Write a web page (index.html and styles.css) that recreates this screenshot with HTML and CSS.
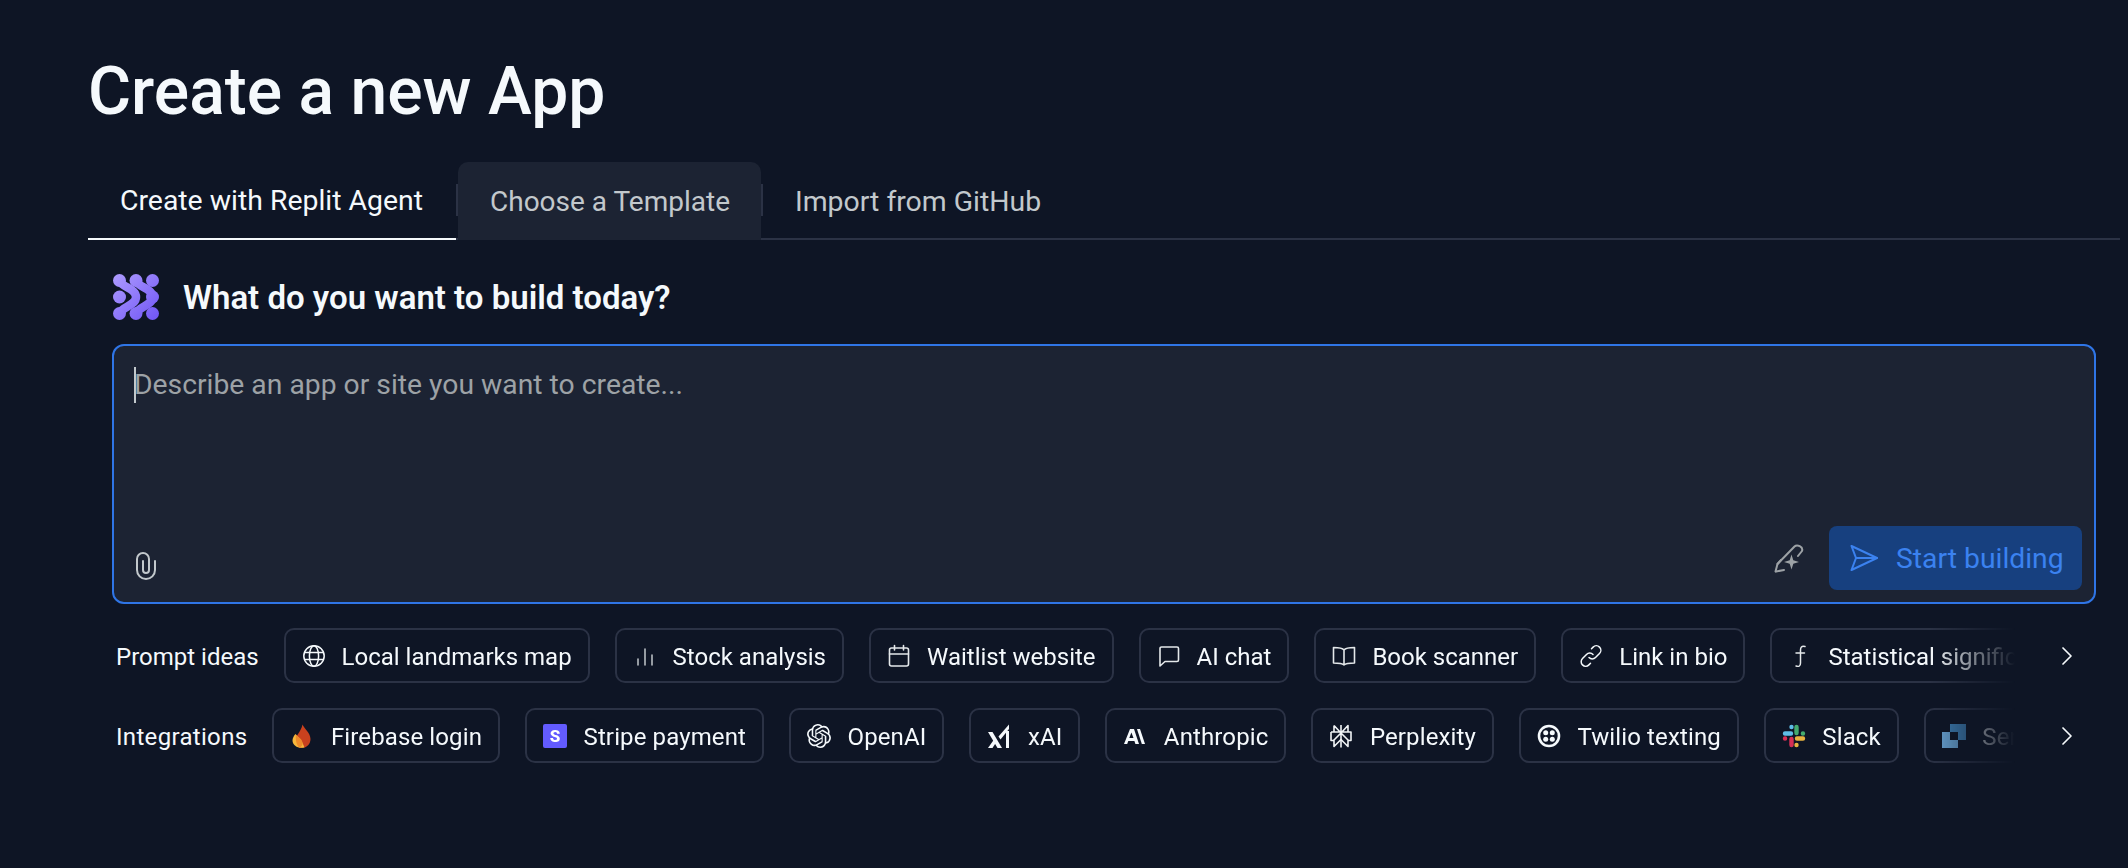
FILE: index.html
```html
<!DOCTYPE html>
<html lang="en">
  <head>
    <meta charset="UTF-8" />
    <meta name="viewport" content="width=device-width, initial-scale=1.0" />
    <title>Create a new App</title>
    <link rel="stylesheet" href="styles.css">
  </head>
  <body>
    <main class="page">
      <h1 class="title">Create a new App</h1>

      <div class="tabs">
        <a class="tab active">Create with Replit Agent</a>
        <a class="tab hovered">Choose a Template</a>
        <a class="tab">Import from GitHub</a>
      </div>

      <section class="agent">
        <div class="question">
          <svg class="agent-logo" width="46" height="46" viewBox="0 0 46 46">
            <defs>
              <linearGradient id="agentGrad" gradientUnits="userSpaceOnUse" x1="0" y1="0" x2="46" y2="46">
                <stop offset="0" stop-color="#ae9cff" />
                <stop offset="1" stop-color="#7055f5" />
              </linearGradient>
            </defs>
            <g fill="url(#agentGrad)">
              <circle cx="6.5" cy="6.5" r="6.5" />
              <circle cx="23" cy="6.5" r="6.5" />
              <circle cx="39.5" cy="6.5" r="6.5" />
              <circle cx="6.5" cy="23" r="6.5" />
              <circle cx="39.5" cy="23" r="6.5" />
              <circle cx="6.5" cy="39.5" r="6.5" />
              <circle cx="23" cy="39.5" r="6.5" />
              <circle cx="39.5" cy="39.5" r="6.5" />
            </g>
            <g fill="none" stroke="url(#agentGrad)" stroke-width="8.5" stroke-linecap="round">
              <path d="M6.5 6.5 C9 14 23 14 23 23 C23 32 9 32 6.5 39.5" />
              <path d="M23 6.5 C25.5 14 39.5 14 39.5 23 C39.5 32 25.5 32 23 39.5" />
            </g>
          </svg>
          <h2 class="question-text">What do you want to build today?</h2>
        </div>

        <div class="prompt-box">
          <div class="placeholder"><span class="caret"></span>Describe an app or site you want to create...</div>
          <div class="prompt-footer">
            <svg class="clip-icon" width="20" height="28" viewBox="0 0 20 28" fill="none" stroke="#c2c8cc" stroke-width="2" stroke-linecap="round">
              <path d="M19 9 V18 a9 9 0 0 1 -18 0 V7 a6 6 0 0 1 12 0 V18 a3 3 0 0 1 -6 0 V9" />
            </svg>
            <div class="prompt-actions">
              <svg class="pen-icon" width="30" height="30" viewBox="0 0 30 30" fill="none" stroke="#9da2a6" stroke-width="2" stroke-linecap="round" stroke-linejoin="round">
                <path d="M1.5 28.5 L3.5 21 L20.5 3.5 C23 1 29.5 3.5 28 8 L24 13" />
                <path d="M2 28.5 L10 27" />
                <path d="M3.5 21 L7 17" />
                <path fill="#9da2a6" stroke="none" d="M17.5 11.5 L19.3 17.2 L25 19 L19.3 20.8 L17.5 26.5 L15.7 20.8 L10 19 L15.7 17.2 Z" />
              </svg>
              <button class="start-btn">
                <svg width="28" height="28" viewBox="0 0 28 28" fill="none" stroke="#3b82f0" stroke-width="2" stroke-linejoin="round" stroke-linecap="round">
                  <path d="M1.5 2 L27 14 L1.5 26 L6 14 Z" />
                  <path d="M6 14 H27" />
                </svg>
                <span>Start building</span>
              </button>
            </div>
          </div>
        </div>

        <div class="chip-row">
          <span class="row-label">Prompt ideas</span>
          <div class="chip-scroll">
            <a class="chip">
              <svg class="chip-icon" viewBox="0 0 24 24" fill="none" stroke="#f5f9fc" stroke-width="1.5">
                <circle cx="12" cy="12" r="10.2" />
                <ellipse cx="12" cy="12" rx="4.6" ry="10.2" />
                <path d="M2.2 8.5 H21.8 M2.2 15.5 H21.8" />
              </svg>
              Local landmarks map
            </a>
            <a class="chip">
              <svg class="chip-icon" viewBox="0 0 24 24" fill="none" stroke="#c2c8cc" stroke-width="1.5" stroke-linecap="round">
                <path d="M5 15 V21 M12 5 V21 M19 11 V21" />
              </svg>
              Stock analysis
            </a>
            <a class="chip">
              <svg class="chip-icon" viewBox="0 0 24 24" fill="none" stroke="#e4e8ea" stroke-width="1.6" stroke-linecap="round" stroke-linejoin="round">
                <rect x="2.5" y="4" width="19" height="18" rx="2" />
                <path d="M2.5 10 H21.5 M7.5 1.5 V6 M16.5 1.5 V6" />
              </svg>
              Waitlist website
            </a>
            <a class="chip">
              <svg class="chip-icon" viewBox="0 0 24 24" fill="none" stroke="#e4e8ea" stroke-width="1.6" stroke-linejoin="round">
                <path d="M3 4.5 a1.5 1.5 0 0 1 1.5 -1.5 H20 a1.5 1.5 0 0 1 1.5 1.5 V16 a1.5 1.5 0 0 1 -1.5 1.5 H8 L3 22 Z" />
              </svg>
              AI chat
            </a>
            <a class="chip">
              <svg class="chip-icon" viewBox="0 0 24 24" fill="none" stroke="#e4e8ea" stroke-width="1.6" stroke-linejoin="round" stroke-linecap="round">
                <path d="M12 6 C10.5 4 7 3.5 1.5 3.5 V19 C7 19 10.5 19.5 12 21 C13.5 19.5 17 19 22.5 19 V3.5 C17 3.5 13.5 4 12 6 V21" />
              </svg>
              Book scanner
            </a>
            <a class="chip">
              <svg class="chip-icon" viewBox="0 0 24 24" fill="none" stroke="#f5f9fc" stroke-width="1.5" stroke-linecap="round">
                <path d="M10 13.5 a4.5 4.5 0 0 0 6.5 0 l4 -4 a4.5 4.5 0 0 0 -6.4 -6.4 l-1.6 1.6" />
                <path d="M14 10.5 a4.5 4.5 0 0 0 -6.5 0 l-4 4 a4.5 4.5 0 0 0 6.4 6.4 l1.6 -1.6" />
              </svg>
              Link in bio
            </a>
            <a class="chip">
              <svg class="chip-icon" viewBox="0 0 24 24" fill="none" stroke="#e4e8ea" stroke-width="1.5" stroke-linecap="round">
                <path d="M17 2.5 C13.5 1.5 12.5 3.5 12.5 6 V19 C12.5 22 11 23 8 22" />
                <path d="M8 9 H16.5" />
              </svg>
              Statistical significance
            </a>
          </div>
          <svg class="chevron" width="14" height="20" viewBox="0 0 14 20" fill="none" stroke="#f5f9fc" stroke-width="1.7" stroke-linecap="round" stroke-linejoin="round">
            <path d="M3 2 L11 10 L3 18" />
          </svg>
        </div>

        <div class="chip-row integrations">
          <span class="row-label">Integrations</span>
          <div class="chip-scroll">
            <a class="chip">
              <svg class="chip-icon" viewBox="0 0 24 24">
                <path fill="#c9411e" d="M12.5 0.5 C13.5 4 20.5 8.5 20.5 15 C20.5 20 17 23.8 12 23.8 C10 23.8 6 22 5.5 17 C5 12 11 8 12.5 0.5 Z" />
                <path fill="#f6b73c" d="M5.5 10 C7 12 10 14 12 18 C13.5 21 14.5 23 14.5 23.6 C13.5 23.8 12.5 23.8 11 23.8 C7 23.8 2.5 21 2.5 16.5 C2.5 14 4 11.5 5.5 10 Z" />
                <path fill="#ee8a2a" d="M5.8 10.4 C8 13 12 14.5 12.5 18.5 C12.8 21 11.5 23 9.5 23.5 C7 21.5 5.5 18 5.8 10.4 Z" />
              </svg>
              Firebase login
            </a>
            <a class="chip">
              <svg class="chip-icon" viewBox="0 0 24 24">
                <rect y="0" width="24" height="24" rx="2" fill="#635bff" />
                <text x="12" y="18" text-anchor="middle" class="stripe-s">S</text>
              </svg>
              Stripe payment
            </a>
            <a class="chip">
              <svg class="chip-icon" viewBox="0 0 24 24" fill="#f5f9fc">
                <path d="M22.2819 9.8211a5.9847 5.9847 0 0 0-.5157-4.9108 6.0462 6.0462 0 0 0-6.5098-2.9A6.0651 6.0651 0 0 0 4.9807 4.1818a5.9847 5.9847 0 0 0-3.9977 2.9 6.0462 6.0462 0 0 0 .7427 7.0966 5.98 5.98 0 0 0 .511 4.9107 6.051 6.051 0 0 0 6.5146 2.9001A5.9847 5.9847 0 0 0 13.2599 24a6.0557 6.0557 0 0 0 5.7718-4.2058 5.9894 5.9894 0 0 0 3.9977-2.9001 6.0557 6.0557 0 0 0-.7475-7.0729zm-9.022 12.6081a4.4755 4.4755 0 0 1-2.8764-1.0408l.1419-.0804 4.7783-2.7582a.7948.7948 0 0 0 .3927-.6813v-6.7369l2.02 1.1686a.071.071 0 0 1 .038.052v5.5826a4.504 4.504 0 0 1-4.4945 4.4944zm-9.6607-4.1254a4.4708 4.4708 0 0 1-.5346-3.0137l.142.0852 4.783 2.7582a.7712.7712 0 0 0 .7806 0l5.8428-3.3685v2.3324a.0804.0804 0 0 1-.0332.0615L9.74 19.9502a4.4992 4.4992 0 0 1-6.1408-1.6464zM2.3408 7.8956a4.485 4.485 0 0 1 2.3655-1.9728V11.6a.7664.7664 0 0 0 .3879.6765l5.8144 3.3543-2.0201 1.1685a.0757.0757 0 0 1-.071 0l-4.8303-2.7865A4.504 4.504 0 0 1 2.3408 7.872zm16.5963 3.8558L13.1038 8.364 15.1192 7.2a.0757.0757 0 0 1 .071 0l4.8303 2.7913a4.4944 4.4944 0 0 1-.6765 8.1042v-5.6772a.79.79 0 0 0-.407-.667zm2.0107-3.0231l-.142-.0852-4.7735-2.7818a.7759.7759 0 0 0-.7854 0L9.409 9.2297V6.8974a.0662.0662 0 0 1 .0284-.0615l4.8303-2.7866a4.4992 4.4992 0 0 1 6.6802 4.66zM8.3065 12.863l-2.02-1.1638a.0804.0804 0 0 1-.038-.0567V6.0742a4.4992 4.4992 0 0 1 7.3757-3.4537l-.142.0805L8.704 5.459a.7948.7948 0 0 0-.3927.6813zm1.0976-2.3654l2.602-1.4998 2.6069 1.4998v2.9994l-2.5974 1.4997-2.6067-1.4997Z" />
              </svg>
              OpenAI
            </a>
            <a class="chip">
              <svg class="chip-icon" viewBox="0 0 24 24" fill="#f5f9fc">
                <path d="M1 8 H5.5 L15 24 H10.5 Z" />
                <path d="M1 24 L7 15.5 L9 18.5 L5.5 24 Z" />
                <path d="M11.5 12.5 L22 0.5 V5 L13.5 15.5 Z" />
                <rect x="19" y="7" width="3" height="17" />
              </svg>
              xAI
            </a>
            <a class="chip">
              <svg class="chip-icon" viewBox="0 0 24 24" fill="#f5f9fc">
                <path d="M7 5 H11 L16 20 H12.4 L11.4 17 H5.3 L4.2 20 H1 Z M6.3 14 H10.5 L8.4 8.5 Z" />
                <path d="M14 5 H17 L22 20 H18.8 Z" />
              </svg>
              Anthropic
            </a>
            <a class="chip">
              <svg class="chip-icon" viewBox="0 0 24 24" fill="none" stroke="#f0f3f5" stroke-width="1.6" stroke-linejoin="round">
                <path d="M12 1 V23.5 M5 1.5 L12 9 L19 1.5 V8 M5 1.5 V8 M2 8 H22 V16.5 H19 M2 8 V16.5 H5" />
                <path d="M12 9 L5 16 V22.5 L12 15.5 L19 22.5 V16 L12 9" />
              </svg>
              Perplexity
            </a>
            <a class="chip">
              <svg class="chip-icon" viewBox="0 0 24 24" fill="none">
                <circle cx="12" cy="12" r="10" stroke="#f5f9fc" stroke-width="2.6" />
                <g fill="#f5f9fc">
                  <circle cx="8.7" cy="8.7" r="2.5" />
                  <circle cx="15.3" cy="8.7" r="2.5" />
                  <circle cx="8.7" cy="15.3" r="2.5" />
                  <circle cx="15.3" cy="15.3" r="2.5" />
                </g>
              </svg>
              Twilio texting
            </a>
            <a class="chip">
              <svg class="chip-icon" viewBox="0 0 24 24" fill="none" stroke-linecap="round" stroke-width="4.4">
                <path stroke="#5fbde6" d="M3 9.5 H9 M9.5 3 V3.1" />
                <path stroke="#44ab6e" d="M14.5 3 V9 M21 9.5 H20.9" />
                <path stroke="#e8b33f" d="M15 14.5 H21 M14.5 21 V20.9" />
                <path stroke="#d52f55" d="M9.5 15 V21 M3 14.5 H3.1" />
              </svg>
              Slack
            </a>
            <a class="chip">
              <svg class="chip-icon" viewBox="0 0 24 24">
                <path fill="#3f80b5" d="M8 0 H24 V16 H16 V8 H8 Z" />
                <path fill="#6ba6d6" d="M0 8 H8 V16 H16 V24 H0 Z" />
              </svg>
              SendGrid
            </a>
          </div>
          <svg class="chevron" width="14" height="20" viewBox="0 0 14 20" fill="none" stroke="#f5f9fc" stroke-width="1.7" stroke-linecap="round" stroke-linejoin="round">
            <path d="M3 2 L11 10 L3 18" />
          </svg>
        </div>
      </section>
    </main>
  </body>
</html>
```

FILE: styles.css
```css
* {
  margin: 0;
  padding: 0;
  box-sizing: border-box;
}

body {
  font-family: Roboto, "Noto Sans", sans-serif;
  background-color: #0e1525;
  color: #f5f9fc;
  height: 868px;
  overflow: hidden;
}

.page {
  padding: 56px 8px 0 88px;
}

.title {
  font-size: 66px;
  line-height: 72px;
  font-weight: 500;
  margin-bottom: 34px;
}

.tabs {
  display: flex;
  height: 78px;
  border-bottom: 2px solid #2b3245;
}

.tab {
  display: flex;
  align-items: center;
  height: 78px;
  padding: 0 32px;
  font-size: 28.4px;
  color: #c2c8cc;
  position: relative;
  white-space: nowrap;
}

.tab.active {
  color: #f5f9fc;
  border-bottom: 2px solid #f5f9fc;
  width: 368px;
}

.tab.hovered {
  background-color: #1c2333;
  border-radius: 10px 10px 0 0;
  width: 303px;
  margin: 0 2px;
  font-size: 28px;
}

.tab.active::after,
.tab.hovered::after {
  content: "";
  position: absolute;
  right: -2px;
  top: 22px;
  width: 2px;
  height: 32px;
  background-color: #2b3245;
}

.agent {
  padding: 33px 24px 0;
}

.question {
  display: flex;
  align-items: center;
  gap: 24px;
  margin-bottom: 23px;
}

.agent-logo {
  margin-left: 1px;
}

.question-text {
  font-size: 33px;
  line-height: 46px;
  font-weight: 600;
  padding-top: 2px;
}

.prompt-box {
  display: flex;
  flex-direction: column;
  justify-content: space-between;
  height: 260px;
  padding: 21px 12px 12px 20px;
  background-color: #1c2333;
  border: 2px solid #2f75e6;
  border-radius: 12px;
  margin-bottom: 24px;
}

.placeholder {
  display: flex;
  align-items: center;
  font-size: 28.3px;
  line-height: 36px;
  color: #9da2a6;
}

.caret {
  width: 2px;
  height: 36px;
  margin-right: -2px;
  background-color: #c2c8cc;
}

.prompt-footer {
  display: flex;
  justify-content: space-between;
  align-items: flex-end;
}

.clip-icon {
  margin: 0 0 10px 2px;
}

.prompt-actions {
  display: flex;
  align-items: center;
  gap: 25px;
}

.start-btn {
  display: flex;
  align-items: center;
  gap: 18px;
  width: 253px;
  height: 64px;
  padding: 0 18px 0 21px;
  background-color: #17407f;
  color: #3b82f0;
  border: none;
  border-radius: 8px;
  font-family: inherit;
  font-size: 28.3px;
  white-space: nowrap;
}

.chip-row {
  display: flex;
  align-items: center;
  height: 55px;
  padding-left: 4px;
  margin-bottom: 25px;
}

.row-label {
  font-size: 24px;
  margin-right: 25px;
  padding-top: 2px;
  white-space: nowrap;
}

.chip-scroll {
  display: flex;
  gap: 25px;
  flex: 1;
  overflow: hidden;
  mask-image: linear-gradient(to right, black calc(100% - 85px), transparent);
}

.chip {
  display: flex;
  flex-shrink: 0;
  align-items: center;
  gap: 16px;
  height: 55px;
  padding: 2px 16px 0;
  border: 2px solid #2b3245;
  border-radius: 10px;
  font-size: 24px;
  white-space: nowrap;
}

.integrations .row-label {
  letter-spacing: 0.32px;
}

.integrations .chip {
  gap: 16.5px;
  letter-spacing: 0.12px;
}

.chip-icon {
  width: 24px;
  height: 24px;
  flex-shrink: 0;
  margin-top: -2px;
}

.stripe-s {
  font-size: 17px;
  font-weight: 800;
  fill: #ffffff;
}

.chevron {
  flex-shrink: 0;
  margin: 0 22px 0 45px;
}
```
